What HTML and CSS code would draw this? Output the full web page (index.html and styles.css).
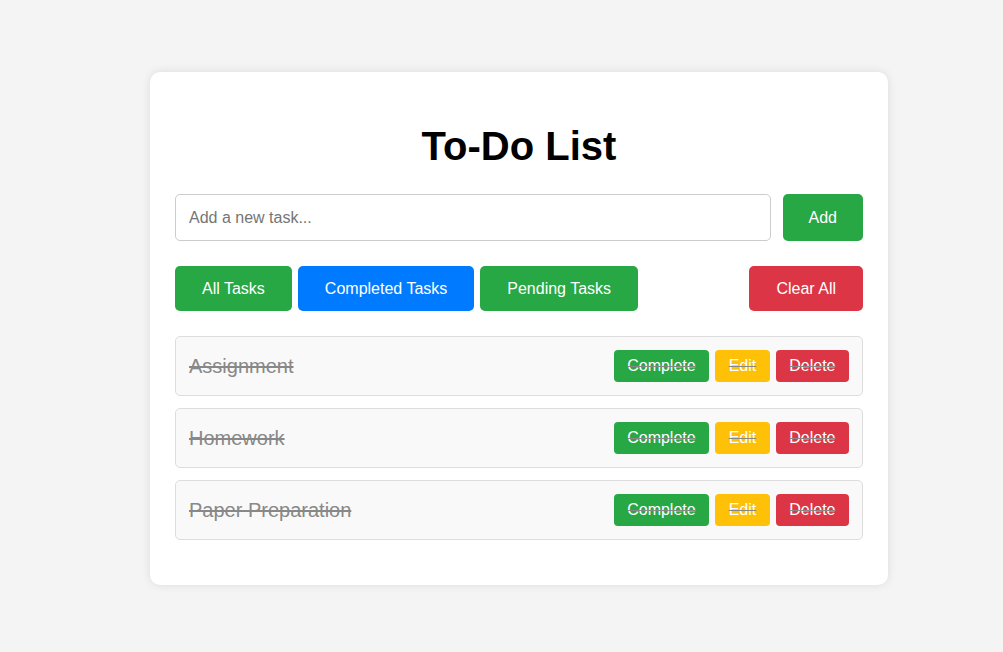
FILE: index.html
```html
<!DOCTYPE html>
<html lang="en">
<head>
<meta charset="UTF-8">
<title>To-Do List</title>
<link rel="stylesheet" href="styles.css">
</head>
<body>
<div class="page">
  <div class="card">
    <h1 class="title">To-Do List</h1>
    <div class="add-row">
      <input class="task-input" type="text" placeholder="Add a new task...">
      <button class="btn btn-green btn-add">Add</button>
    </div>
    <div class="filters">
      <button class="btn btn-green btn-filter">All Tasks</button>
      <button class="btn btn-blue btn-filter">Completed Tasks</button>
      <button class="btn btn-green btn-filter">Pending Tasks</button>
      <button class="btn btn-red btn-filter btn-clear">Clear All</button>
    </div>
    <ul class="tasks">
      <li class="task done">
        <span class="task-text">Assignment</span>
        <div class="actions">
          <button class="btn btn-green btn-small">Complete</button>
          <button class="btn btn-yellow btn-small">Edit</button>
          <button class="btn btn-red btn-small">Delete</button>
        </div>
      </li>
      <li class="task done">
        <span class="task-text">Homework</span>
        <div class="actions">
          <button class="btn btn-green btn-small">Complete</button>
          <button class="btn btn-yellow btn-small">Edit</button>
          <button class="btn btn-red btn-small">Delete</button>
        </div>
      </li>
      <li class="task done">
        <span class="task-text">Paper Preparation</span>
        <div class="actions">
          <button class="btn btn-green btn-small">Complete</button>
          <button class="btn btn-yellow btn-small">Edit</button>
          <button class="btn btn-red btn-small">Delete</button>
        </div>
      </li>
    </ul>
  </div>
</div>
</body>
</html>
```

FILE: styles.css
```css
* { box-sizing: border-box; }

html, body {
  margin: 0;
  padding: 0;
  background: #f4f4f4;
  font-family: "Liberation Sans", Arial, sans-serif;
}

.page {
  padding: 72px 0 0 150px;
  min-height: 652px;
}

.card {
  width: 738px;
  background: #fff;
  border-radius: 10px;
  box-shadow: 0 0 10px rgba(0, 0, 0, 0.1);
  padding: 25px 25px 45px;
}

.title {
  margin: 26px 0 25px;
  font-size: 40px;
  line-height: 46px;
  font-weight: bold;
  text-align: center;
  color: #000;
}

.add-row {
  display: flex;
  gap: 12px;
}

.task-input {
  flex: 1;
  height: 47px;
  border: 1px solid #ccc;
  border-radius: 5px;
  padding: 0 13px;
  font-size: 16px;
  font-family: "Liberation Sans", Arial, sans-serif;
  color: #333;
  outline: none;
}

.task-input::placeholder { color: #757575; }

.btn {
  border: none;
  color: #fff;
  font-family: "Liberation Sans", Arial, sans-serif;
  font-size: 16px;
  border-radius: 5px;
  cursor: pointer;
}

.btn-green { background: #28a745; }
.btn-blue { background: #007bff; }
.btn-red { background: #dc3545; }
.btn-yellow { background: #ffc107; }

.btn-add {
  height: 47px;
  padding: 0 26px;
}

.filters {
  display: flex;
  gap: 6px;
  margin-top: 25px;
}

.btn-filter {
  height: 45px;
  padding: 0 27px;
}

.btn-clear { margin-left: auto; }

.tasks {
  list-style: none;
  margin: 25px 0 0;
  padding: 0;
  display: flex;
  flex-direction: column;
  gap: 12px;
}

.task {
  display: flex;
  align-items: center;
  justify-content: space-between;
  height: 60px;
  padding: 0 13px;
  background: #f9f9f9;
  border: 1px solid #ddd;
  border-radius: 5px;
}

.task.done {
  color: #888;
  text-decoration: line-through;
}

.task-text {
  font-size: 20px;
}

.actions {
  display: flex;
  gap: 6px;
}

.btn-small {
  height: 32px;
  padding: 0 13.5px;
  border-radius: 4px;
  font-size: 16px;
}
```
